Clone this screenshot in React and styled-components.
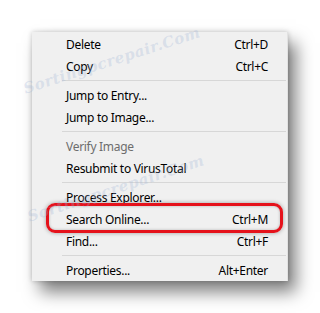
import React from "react";
import styled, { createGlobalStyle } from "styled-components";

const Global = createGlobalStyle`
  html, body { margin: 0; padding: 0; background: #ffffff; }
  body { width: 320px; height: 313px; overflow: hidden; }
`;

const Page = styled.div`
  position: relative;
  width: 320px;
  height: 313px;
  overflow: hidden;
  padding: 32px 0 0 32px;
  box-sizing: border-box;
  font-family: "Noto Sans", "Open Sans", sans-serif;
  font-size: 12px;
  letter-spacing: -0.3px;
`;

const Menu = styled.div`
  width: 256px;
  box-sizing: border-box;
  padding: 1px 0 0 0;
  background: #f0f0f0;
  border-right: 1px solid #e2e2e2;
  box-shadow: 0 0 5px rgba(0, 0, 0, 0.22), 8px 11px 16px rgba(0, 0, 0, 0.5);
`;

const Item = styled.div`
  position: relative;
  display: flex;
  align-items: center;
  height: 22px;
  padding: 0 19px 0 34px;
  color: ${(p) => (p.$disabled ? "#6d6d6d" : "#000000")};
  white-space: nowrap;
`;

const Label = styled.span`
  flex: 1;
`;

const Shortcut = styled.span`
  margin-left: 16px;
`;

const Separator = styled.div`
  height: 1px;
  margin: 3px 1px 3px 30px;
  background: #d7d7d7;
`;

const Highlight = styled.div`
  position: absolute;
  left: 14px;
  right: 4px;
  top: -5px;
  bottom: -3px;
  border: 3px solid #e5121b;
  border-radius: 9px;
  box-shadow: 0 0 4px rgba(0, 0, 0, 0.35), inset 0 0 3px rgba(0, 0, 0, 0.25);
  pointer-events: none;
`;

const Watermark = styled.div`
  position: absolute;
  left: ${(p) => p.$x}px;
  top: ${(p) => p.$y}px;
  transform: rotate(-18deg);
  transform-origin: left center;
  font-family: "DejaVu Serif", serif;
  font-style: italic;
  font-weight: bold;
  font-size: 15px;
  letter-spacing: 0.5px;
  color: rgba(160, 180, 215, 0.3);
  white-space: nowrap;
  pointer-events: none;
`;

const items = [
  { label: "Delete", shortcut: "Ctrl+D" },
  { label: "Copy", shortcut: "Ctrl+C" },
  "sep",
  { label: "Jump to Entry..." },
  { label: "Jump to Image..." },
  "sep",
  { label: "Verify Image", disabled: true },
  { label: "Resubmit to VirusTotal" },
  "sep",
  { label: "Process Explorer..." },
  { label: "Search Online...", shortcut: "Ctrl+M", highlight: true },
  { label: "Find...", shortcut: "Ctrl+F" },
  "sep",
  { label: "Properties...", shortcut: "Alt+Enter" },
];

export default function App() {
  return (
    <Page>
      <Global />
      <Menu>
        {items.map((it, i) =>
          it === "sep" ? (
            <Separator key={i} />
          ) : (
            <Item key={i} $disabled={it.disabled}>
              <Label>{it.label}</Label>
              {it.shortcut && <Shortcut>{it.shortcut}</Shortcut>}
              {it.highlight && <Highlight />}
            </Item>
          )
        )}
      </Menu>
      <Watermark $x={24} $y={80}>Sortingpcrepair.Com</Watermark>
      <Watermark $x={28} $y={208}>Sortingpcrepair.Com</Watermark>
    </Page>
  );
}
